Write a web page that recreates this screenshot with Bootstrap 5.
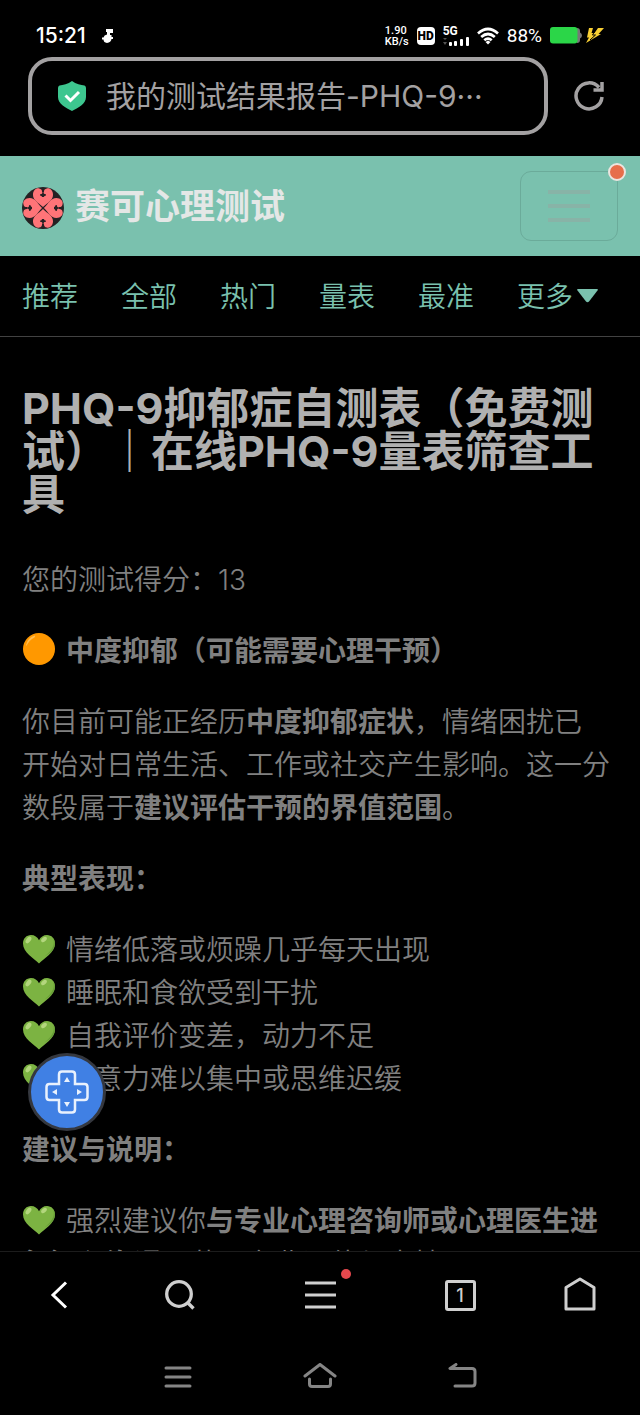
<!DOCTYPE html>
<html lang="zh-CN">
<head>
<meta charset="utf-8">
<meta name="viewport" content="width=device-width, initial-scale=1">
<title>我的测试结果报告-PHQ-9</title>
<link href="https://cdn.jsdelivr.net/npm/bootstrap@5.3.0/dist/css/bootstrap.min.css" rel="stylesheet">
<style>
  :root { --mint: #7ac1ae; --gutter: 22px; }
  body { background: #000; color: #808080; font-family: Inter, "Noto Sans CJK SC", sans-serif; font-size: 28px; line-height: 43px; font-weight: 350; }
  svg { display: block; flex: none; }
  button { background: none; border: 0; padding: 0; color: inherit; }
  .status { height: 57px; padding: 14px 36px 0; color: #fff; font-family: Roboto, sans-serif; font-size: 19px; line-height: 28px; font-weight: 400; }
  .clock { font-family: Inter, sans-serif; font-size: 21px; font-weight: 500; }
  .rate { font-size: 11px; font-weight: 500; }
  .rate span { display: block; line-height: 11px; }
  .hd { background: #fff; color: #000; border-radius: 4px; font-size: 12px; line-height: 18px; width: 18px; font-weight: 900; text-align: center; }
  .net { font-size: 12px; line-height: 11px; font-weight: 700; }
  .address { gap: 26px; padding: 0 28px 21px; }
  .urlbox { min-width: 0; height: 78px; border: 4px solid #a3a1a2; border-radius: 24px; padding: 0 24px; gap: 18px; }
  .urlbox input { min-width: 0; background: none; border: 0; outline: 0; color: #a3a1a2; font-size: 30px; font-weight: 400; padding: 0; }
  .site { background: var(--mint); height: 100px; padding: 0 var(--gutter); }
  .brand { color: #e4e7e6; font-size: 35px; font-weight: 700; gap: 11px; }
  .brand:hover { color: #fff; }
  .toggler { width: 98px; height: 70px; border: 1px solid #6bab9a; border-radius: 11px; color: #88b3a7; }
  .toggler svg { margin: auto; }
  .alert-dot { width: 18px; height: 18px; border: 2px solid #ece4df; background: #e66e4b; }
  .tabs { padding: 20px var(--gutter) 17px; gap: 43px; border-bottom: 1px solid #424242; }
  .tabs a { color: var(--mint); text-decoration: none; white-space: nowrap; }
  .report { padding: 50px var(--gutter) 0; }
  .report h1 { font-size: 43px; line-height: 43px; font-weight: 700; color: #b0b0b0; margin-bottom: 43px; }
  .report p, .report ul { margin-bottom: 28px; }
  .report strong { font-weight: 700; }
  .mood { display: inline-block; vertical-align: -5px; margin-right: 10px; }
  .pad { left: 28px; bottom: 120px; width: 78px; height: 78px; border: 3px solid #35383f; background: #4080e4; }
  .pad svg { margin: auto; }
  .browser-nav { display: grid; grid-template-columns: 3fr 3fr 4fr 3fr 3fr; height: 87px; border-top: 1px solid #1c1c1c; color: #cfcfcf; }
  .system-nav { height: 77px; gap: 106px; color: #858585; }
  .tabcount { width: 31px; height: 31px; border: 3px solid #cfcfcf; border-radius: 3px; font-size: 18px; line-height: 25px; font-weight: 500; }
  .news { width: 10px; height: 10px; background: #e5484d; left: 100%; top: -12px; margin-left: 5px; }
</style>
</head>
<body class="vh-100 d-flex flex-column overflow-hidden">

<svg class="d-none" aria-hidden="true">
  <defs>
    <symbol id="heart" viewBox="0 0 34 32">
      <path d="M17 30.500C12 25 1 20 1 10.500C1 5.500 4.500 2 9 2c3.500 0 6.500 2 8 5.200C18.500 4 21.500 2 25 2c4.500 0 8 3.500 8 8.500C33 20 22 25 17 30.500z" fill="#7cb342"/>
      <ellipse cx="6.500" cy="7" rx="2.200" ry="3.800" transform="rotate(38 6.500 7)" fill="#b3d67d"/>
      <ellipse cx="22" cy="6.500" rx="2" ry="3.300" transform="rotate(48 22 6.500)" fill="#b3d67d"/>
      <path d="M31.500 6c1.500 7-2.500 12-9 17.500c6-3 10.500-7.500 10.500-13q0-2.500-1.500-4.500z" fill="#689f38"/>
    </symbol>
    <symbol id="petal" viewBox="-22 -22 44 44">
      <path d="M0-1C-5-6-10.500-8-10.500-14C-10.500-18.500-7-21.500-4-20.500Q-1-20-1-17Q0-15.500 1-17Q1-20 4-20.500C7-21.500 10.500-18.500 10.500-14C10.500-8 5-6 0-1z" fill="#ff7478"/>
      <path d="M0-18L1-15l2 .5q.5 2-2 2l.5 1h-3l.5-1q-2.500 0-2-2L-1-15z" fill="#252123"/>
    </symbol>
  </defs>
</svg>

<header>
  <div class="status d-flex align-items-center">
    <span class="clock">15:21</span>
    <svg class="ms-3 me-auto" width="12" height="14" viewBox="0 0 12 14" fill="#fff"><path d="M4 0h7v4H8v2h1.500v2H11v2H9.500q-.5 3.500-4.500 4Q1.500 13.500 1.500 10.500H0v-2h1.500q.5-2.500 3.500-3V3H4z"/></svg>
    <div class="d-flex align-items-center">
      <span class="rate"><span>1.90</span><span>KB/s</span></span>
      <span class="hd ms-2">HD</span>
      <span class="net ms-2">5G
        <svg width="26" height="9" viewBox="0 0 26 9" fill="#fff"><path d="M0 1h4L2 3zM0 5h4L2 8z" fill="#555"/><rect x="6" y="5" width="3" height="4" rx="1"/><rect x="11" y="4" width="3" height="5" rx="1"/><rect x="17" y="2" width="3" height="7" rx="1"/><rect x="23" y="0" width="3" height="9" rx="1"/></svg>
      </span>
      <svg class="ms-2" width="22" height="18" viewBox="0 0 22 18" fill="none" stroke="#fff" stroke-width="2.700"><path d="M1 6.500Q11-2.500 21 6.500M4.200 10Q11 4 17.800 10M7.300 13.300Q11 10 14.700 13.300"/><path d="M11 13.500L13.500 15 11 17.600 8.500 15z" fill="#fff" stroke="none"/></svg>
      <span class="mx-2">88%</span>
      <svg width="32" height="17" viewBox="0 0 32 17"><path d="M27 1q3 0 3 3v1.500q2 1 2 3t-2 3V13q0 3-3 3z" fill="#777"/><rect y="0" width="27.500" height="16.500" rx="3" fill="#2bd648"/></svg>
      <svg class="ms-1" width="18" height="15" viewBox="0 0 18 15" fill="#f8cf34"><path d="M3 0h4L5.500 5h3L12 0h6l-5.500 6h2.500L0 15l3-5.500H1z"/><path d="M10 1L6.500 7h3L4 12" fill="none" stroke="#000" stroke-width="1"/></svg>
    </div>
  </div>

  <div class="address d-flex align-items-center">
    <div class="urlbox d-flex align-items-center flex-grow-1">
      <svg width="32" height="32" viewBox="0 0 32 32"><path d="M16 1C12 4 7 5 3.500 5.500Q2 6 2 8v9c0 7 8 11 14 14 6-3 14-7 14-14V8q0-2-1.500-2.500C25 5 20 4 16 1z" fill="#3dc68f"/><path d="M9.500 15.500l5 5 8.500-8.500" fill="none" stroke="#fff" stroke-width="3"/></svg>
      <input class="flex-grow-1" type="text" aria-label="网址" value="我的测试结果报告-PHQ-9···" readonly>
    </div>
    <button type="button" aria-label="刷新"><svg class="me-2" width="30" height="32" viewBox="0 0 30 32" fill="none" stroke="#a3a1a2" stroke-width="3.500"><path d="M28 17A13 13 0 1 1 25 7.500"/><path d="M19.500 10H28V2"/></svg></button>
  </div>

  <nav class="site d-flex align-items-center justify-content-between" aria-label="站点">
    <a href="#" class="brand d-flex align-items-center text-decoration-none">
      <svg class="mt-1" width="42" height="42" viewBox="-22 -22 44 44"><circle r="22" fill="#252123"/>
        <use href="#petal" x="-22" y="-22" width="44" height="44"/>
        <use href="#petal" x="-22" y="-22" width="44" height="44" transform="rotate(90)"/>
        <use href="#petal" x="-22" y="-22" width="44" height="44" transform="rotate(180)"/>
        <use href="#petal" x="-22" y="-22" width="44" height="44" transform="rotate(270)"/>
      </svg>
      赛可心理测试
    </a>
    <button type="button" class="toggler position-relative" aria-label="菜单">
      <svg width="42" height="32" viewBox="0 0 42 32" stroke="currentColor" stroke-width="4"><path d="M0 2h42M0 16h42M0 30h42"/></svg>
      <span class="alert-dot position-absolute top-0 start-100 translate-middle rounded-circle"></span>
    </button>
  </nav>

  <nav class="tabs d-flex" aria-label="分类">
    <a href="#">推荐</a><a href="#">全部</a><a href="#">热门</a><a href="#">量表</a><a href="#">最准</a>
    <a href="#" class="d-flex align-items-center">更多<svg class="ms-1 mb-1" width="21" height="14" viewBox="0 0 21 14" fill="currentColor"><path d="M1 0h19q1.500 0 .5 1.500L12 12.500q-1.500 1.500-3 0L.5 1.500Q-.5 0 1 0z"/></svg></a>
  </nav>
</header>

<div class="flex-fill position-relative overflow-hidden">
  <main class="report h-100 overflow-hidden">
    <h1>PHQ-9抑郁症自测表（免费测试）｜在线PHQ-9量表筛查工具</h1>
    <p>您的测试得分：13</p>
    <p><svg class="mood" width="34" height="34" viewBox="0 0 34 34"><circle cx="17" cy="17" r="16" fill="#ff9800"/><path d="M4 13Q6 5 13 3.500Q14 5 10 7Q7 9 5.500 12Q4.500 15 4 13z" fill="#ffbd52"/></svg><strong>中度抑郁（可能需要心理干预）</strong></p>
    <p>你目前可能正经历<strong>中度抑郁症状</strong>，情绪困扰已<br>开始对日常生活、工作或社交产生影响。这一分<br>数段属于<strong>建议评估干预的界值范围</strong>。</p>
    <p><strong>典型表现：</strong></p>
    <ul class="list-unstyled">
      <li><svg class="mood" width="34" height="32"><use href="#heart"/></svg>情绪低落或烦躁几乎每天出现</li>
      <li><svg class="mood" width="34" height="32"><use href="#heart"/></svg>睡眠和食欲受到干扰</li>
      <li><svg class="mood" width="34" height="32"><use href="#heart"/></svg>自我评价变差，动力不足</li>
      <li><svg class="mood" width="34" height="32"><use href="#heart"/></svg>注意力难以集中或思维迟缓</li>
    </ul>
    <p><strong>建议与说明：</strong></p>
    <p><svg class="mood" width="34" height="32"><use href="#heart"/></svg>强烈建议你<strong>与专业心理咨询师或心理医生进<br>行深入沟通</strong>，获取专业评估与支持。</p>
  </main>
  <button type="button" class="pad position-absolute rounded-circle" aria-label="快捷操作">
    <svg width="44" height="44" viewBox="0 0 44 44" fill="none" stroke="#e9f1fd" stroke-width="2.500"><path d="M17 1.500h10q3 0 3 3V14h9.500q3 0 3 3v10q0 3-3 3H30v9.500q0 3-3 3H17q-3 0-3-3V30H4.500q-3 0-3-3V17q0-3 3-3H14V4.500q0-3 3-3z"/><path d="M22 7l3 5h-6zM22 37l3-5h-6zM7 22l5-3v6zM37 22l-5-3v6z" fill="#e9f1fd" stroke="none"/></svg>
  </button>
</div>

<footer>
  <nav class="browser-nav align-items-center" aria-label="浏览器">
    <button type="button" class="mx-auto" aria-label="后退"><svg width="20" height="28" viewBox="0 0 20 28" fill="none" stroke="#fff" stroke-width="3"><path d="M16 1.500L3 14l13 12.500"/></svg></button>
    <button type="button" class="mx-auto" aria-label="搜索"><svg width="30" height="30" viewBox="0 0 30 30" fill="none" stroke="currentColor" stroke-width="3.300"><circle cx="14" cy="14" r="12.300"/><path d="M23 23l5.500 5.500"/></svg></button>
    <button type="button" class="mx-auto position-relative" aria-label="菜单"><svg width="31" height="28" viewBox="0 0 31 28" stroke="currentColor" stroke-width="3"><path d="M0 2h31M0 14h31M0 26h31"/></svg><span class="news position-absolute rounded-circle"></span></button>
    <button type="button" class="mx-auto tabcount" aria-label="标签页">1</button>
    <button type="button" class="mx-auto" aria-label="主页"><svg width="32" height="36" viewBox="0 0 32 36" fill="none" stroke="currentColor" stroke-width="3" stroke-linejoin="round"><path d="M2 10.500L16 2l14 8.500V32H2z"/></svg></button>
  </nav>
  <nav class="system-nav d-flex align-items-center justify-content-center" aria-label="系统">
    <button type="button" aria-label="最近任务"><svg width="36" height="28" viewBox="0 0 36 28" fill="none" stroke="currentColor" stroke-width="3" stroke-linecap="round"><path d="M6 5h24M6 14h24M6 23h24"/></svg></button>
    <button type="button" aria-label="桌面"><svg width="36" height="28" viewBox="0 0 36 28" fill="none" stroke="currentColor" stroke-width="3" stroke-linecap="round" stroke-linejoin="round"><path d="M3 13L18 1.500 33 13M7.500 16v5q0 2.500 2.500 2.500h16q2.500 0 2.500-2.500v-5"/></svg></button>
    <button type="button" aria-label="返回"><svg width="36" height="28" viewBox="0 0 36 28" fill="none" stroke="currentColor" stroke-width="3" stroke-linecap="round" stroke-linejoin="round"><path d="M12 1.500L6 5.500h22q3 0 3 3V20q0 3-3 3H11"/></svg></button>
  </nav>
</footer>
<script src="https://cdn.jsdelivr.net/npm/bootstrap@5.3.0/dist/js/bootstrap.bundle.min.js"></script>
</body>
</html>
